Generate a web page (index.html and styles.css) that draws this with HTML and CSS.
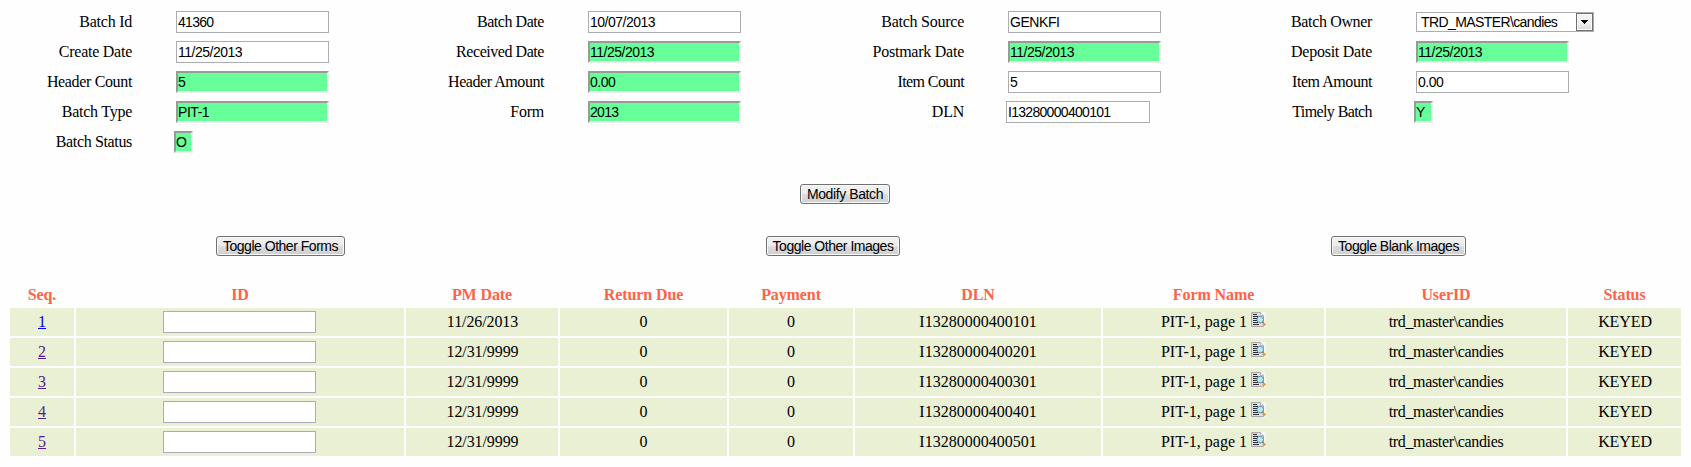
FILE: index.html
```html
<!DOCTYPE html>
<html lang="en">
<head>
<meta charset="utf-8">
<title>Batch</title>
<link rel="stylesheet" href="styles.css">
</head>
<body>
<form class="fields">
  <label class="label">Batch Id</label><input class="field" value="41360">
  <label class="label tight">Batch Date</label><input class="field date" value="10/07/2013">
  <label class="label">Batch Source</label><input class="field letters" value="GENKFI">
  <label class="label owner">Batch Owner</label>
  <div class="select"><span class="select-text">TRD_MASTER\candies</span><span class="select-button"><svg width="7" height="4" viewBox="0 0 7 4"><path d="M0 0h7v1H6v1H5v1H4v1H3V3H2V2H1V1H0z"/></svg></span></div>

  <label class="label">Create Date</label><input class="field date" value="11/25/2013">
  <label class="label tight">Received Date</label><input class="field date locked" value="11/25/2013">
  <label class="label">Postmark Date</label><input class="field date locked" value="11/25/2013">
  <label class="label">Deposit Date</label><input class="field date locked" value="11/25/2013">

  <label class="label owner">Header Count</label><input class="field locked" value="5">
  <label class="label tight">Header Amount</label><input class="field locked letters" value="0.00">
  <label class="label tighter">Item Count</label><input class="field" value="5">
  <label class="label tight">Item Amount</label><input class="field letters" value="0.00">

  <label class="label">Batch Type</label><input class="field locked letters" value="PIT-1">
  <label class="label">Form</label><input class="field locked" value="2013">
  <label class="label">DLN</label><input class="field dln" value="I13280000400101">
  <label class="label tighter">Timely Batch</label><input class="field locked flag" value="Y">

  <label class="label owner">Batch Status</label><input class="field locked flag" value="O">
</form>

<div class="submit"><button class="button modify">Modify Batch</button></div>
<div class="toggles">
  <button class="button forms">Toggle Other Forms</button>
  <button class="button images">Toggle Other Images</button>
  <button class="button blanks">Toggle Blank Images</button>
</div>

<svg class="defs" width="0" height="0">
  <symbol id="preview" viewBox="0 0 15 15">
    <path d="M0 0h15v15H0z" fill="#f4f4f4"/>
    <path d="M.5 .5h9l3 3v11H.5z" fill="#e0e0e3" stroke="#a9a9ad"/>
    <path d="M9.5 .5v3h3" fill="#fff" stroke="#b5b5b8"/>
    <path d="M2 2.5h4M2 4.5h5M2 6.5h4M2 8.5h4M2 10.5h5M2 12.5h6" stroke="#2c2c30" stroke-width="1.2"/>
    <circle cx="9.2" cy="7.6" r="3.3" fill="#b5e9f7" stroke="#6590a8"/>
    <path d="M11.4 10l1 1" stroke="#777" stroke-width="1.3"/>
    <circle cx="13.1" cy="12.3" r="1.6" fill="#e2a32d"/>
  </symbol>
</svg>

<table class="items">
  <colgroup><col class="c-seq"><col class="c-id"><col class="c-date"><col class="c-due"><col class="c-pay"><col class="c-dln"><col class="c-form"><col class="c-user"><col class="c-status"></colgroup>
  <thead>
    <tr><th>Seq.</th><th>ID</th><th>PM Date</th><th>Return Due</th><th>Payment</th><th>DLN</th><th>Form Name</th><th>UserID</th><th>Status</th></tr>
  </thead>
  <tbody>
    <tr><td><a class="fresh" href="#">1</a></td><td><input class="field"></td><td class="wide">11/26/2013</td><td>0</td><td>0</td><td>I13280000400101</td><td>PIT-1, page 1 <svg class="icon"><use href="#preview"/></svg></td><td class="user">trd_master\candies</td><td class="wide">KEYED</td></tr>
    <tr><td><a href="#">2</a></td><td><input class="field"></td><td class="wide">12/31/9999</td><td>0</td><td>0</td><td>I13280000400201</td><td>PIT-1, page 1 <svg class="icon"><use href="#preview"/></svg></td><td class="user">trd_master\candies</td><td class="wide">KEYED</td></tr>
    <tr><td><a href="#">3</a></td><td><input class="field"></td><td class="wide">12/31/9999</td><td>0</td><td>0</td><td>I13280000400301</td><td>PIT-1, page 1 <svg class="icon"><use href="#preview"/></svg></td><td class="user">trd_master\candies</td><td class="wide">KEYED</td></tr>
    <tr><td><a href="#">4</a></td><td><input class="field"></td><td class="wide">12/31/9999</td><td>0</td><td>0</td><td>I13280000400401</td><td>PIT-1, page 1 <svg class="icon"><use href="#preview"/></svg></td><td class="user">trd_master\candies</td><td class="wide">KEYED</td></tr>
    <tr><td><a href="#">5</a></td><td><input class="field"></td><td class="wide">12/31/9999</td><td>0</td><td>0</td><td>I13280000400501</td><td>PIT-1, page 1 <svg class="icon"><use href="#preview"/></svg></td><td class="user">trd_master\candies</td><td class="wide">KEYED</td></tr>
  </tbody>
</table>
</body>
</html>
```
FILE: styles.css
```css
* { box-sizing: border-box; }
body {
  margin: 0;
  background: #fefefe;
  color: #000;
  font: 16px/20px "Liberation Serif", "Times New Roman", serif;
  overflow: hidden;
}
.fields {
  display: grid;
  grid-template-columns: 132px 153px 171px 153px 179px 153px 167px 178px;
  grid-auto-rows: 22px;
  gap: 8px 44px;
  padding-top: 11px;
}
.label {
  text-align: right;
  white-space: nowrap;
  line-height: 22px;
  letter-spacing: -0.25px;
}
.label.tight { letter-spacing: -0.45px; }
.label.tighter { letter-spacing: -0.6px; }
.label.owner { letter-spacing: -0.35px; }
.field {
  width: 153px;
  height: 22px;
  margin: 0;
  padding: 1px;
  border: 1px solid #abadb3;
  border-radius: 0;
  outline: 0;
  background: #fff;
  color: #000;
  font: 14px "Liberation Sans", Arial, sans-serif;
  letter-spacing: -0.7px;
}
.field.date { letter-spacing: -0.5px; }
.field.letters { letter-spacing: -0.45px; }
.field.locked {
  padding: 0;
  border: 2px solid;
  border-color: #9a9a9a #eee #eee #9a9a9a;
  background: #6f9;
}
.field.flag { width: 19px; margin-left: -2px; }
.field.dln { width: 144px; margin-left: -2px; }
.select {
  display: flex;
  justify-content: space-between;
  width: 178px;
  height: 20px;
  margin-top: 1px;
  border: 1px solid #abadb3;
  background: #fff;
  font: 14px/19px "Liberation Sans", Arial, sans-serif;
}
.select-text { padding-left: 4px; letter-spacing: -0.6px; }
.select-button {
  display: flex;
  align-items: center;
  justify-content: center;
  width: 17px;
  height: 18px;
  border: 1px solid #707070;
  box-shadow: inset 0 0 0 1px #fafafa;
  background: linear-gradient(#f2f2f2 50%, #d8d8d8);
}
.button {
  height: 20px;
  padding: 0;
  border: 1px solid #707070;
  border-radius: 3px;
  box-shadow: inset 0 0 0 1px #fafafa;
  background: linear-gradient(#f2f2f2, #ebebeb 50%, #ddd 50%, #cfcfcf);
  color: #000;
  font: 14px/18px "Liberation Sans", Arial, sans-serif;
  letter-spacing: -0.48px;
  white-space: nowrap;
}
.submit { display: flex; justify-content: center; padding: 31px 1px 0 0; }
.toggles {
  display: grid;
  grid-template-columns: 561px 544px 587px;
  justify-items: center;
  padding-top: 32px;
}
.modify { width: 90px; letter-spacing: -0.4px; }
.forms { width: 129px; }
.images { width: 134px; }
.blanks { width: 135px; }
.defs { display: block; }
.items {
  table-layout: fixed;
  width: 1675px;
  margin: 24px 0 0 8px;
  border-spacing: 2px;
}
.c-seq { width: 64px; }
.c-id { width: 328px; }
.c-date { width: 152px; }
.c-due { width: 167px; }
.c-pay { width: 124px; }
.c-dln { width: 246px; }
.c-form { width: 221px; }
.c-user { width: 240px; }
.c-status { width: 113px; }
.items th {
  height: 24px;
  padding: 1px 0 0;
  color: #ff6347;
  font-weight: bold;
  letter-spacing: -0.1px;
}
.items td {
  height: 28px;
  padding: 0;
  background: #e9f0d3;
  text-align: center;
  white-space: nowrap;
}
.items .field { display: block; margin: 0 0 0 87px; }
.items a { color: #551a8b; }
.items a.fresh { color: #00e; }
.items .user { letter-spacing: -0.35px; }
.items .wide { padding-left: 1px; letter-spacing: -0.1px; }
.icon { width: 15px; height: 15px; vertical-align: 0; }
```
